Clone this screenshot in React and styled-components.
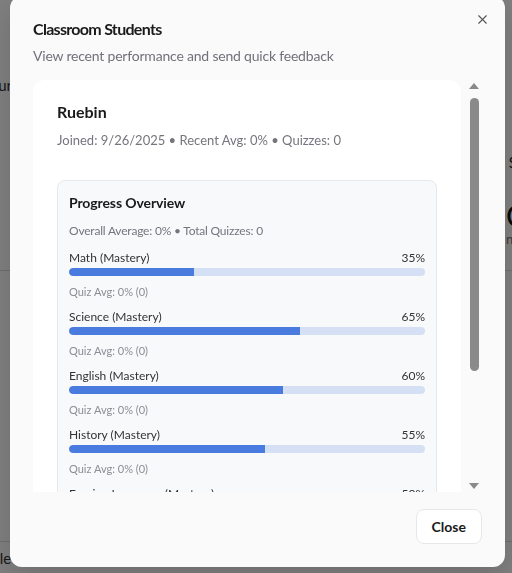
import React from 'react'
import styled, { createGlobalStyle } from 'styled-components'
import { X } from 'lucide-react'

const GlobalStyle = createGlobalStyle`
  * { box-sizing: border-box; }
  body {
    margin: 0;
    font-family: Lato, "Noto Sans", sans-serif;
    background: #fff;
    color: #1f1f1f;
  }
`

const student = {
  name: 'Ruebin',
  joined: '9/26/2025',
  recentAvg: 0,
  quizzes: 0,
}

const subjects = [
  { name: 'Math', value: 35 },
  { name: 'Science', value: 65 },
  { name: 'English', value: 60 },
  { name: 'History', value: 55 },
  { name: 'Foreign Language', value: 50 },
  { name: 'Art', value: 45 },
]

const App = () => {
  return (
    <>
      <GlobalStyle />
      <Page>
        <PageRow>
          <Peek>Your</Peek>
          <PeekRight>Sc</PeekRight>
        </PageRow>
        <PageRow>
          <span />
          <PeekBig>
            C<small>n</small>
          </PeekBig>
        </PageRow>
        <Divider />
        <PageFooter>
          <Peek>Title</Peek>
        </PageFooter>
      </Page>

      <Overlay>
        <Modal role='dialog'>
          <CloseIcon aria-label='close'>
            <X size={15} strokeWidth={1.8} />
          </CloseIcon>

          <Header>
            <h2>Classroom Students</h2>
            <p>View recent performance and send quick feedback</p>
          </Header>

          <ScrollArea>
            <Viewport>
              <StudentCard>
                <h3>{student.name}</h3>
                <p className='meta'>
                  Joined: {student.joined} • Recent Avg: {student.recentAvg}% • Quizzes: {student.quizzes}
                </p>

                <ProgressBox>
                  <h4>Progress Overview</h4>
                  <p className='summary'>Overall Average: 0% • Total Quizzes: 0</p>
                  {subjects.map((s) => (
                    <SubjectRow key={s.name}>
                      <div className='top'>
                        <span>{s.name} (Mastery)</span>
                        <span>{s.value}%</span>
                      </div>
                      <Track>
                        <Fill style={{ width: `${s.value}%` }} />
                      </Track>
                      <p className='quiz'>Quiz Avg: 0% (0)</p>
                    </SubjectRow>
                  ))}
                </ProgressBox>
              </StudentCard>
            </Viewport>

            <Scrollbar>
              <Arrow $dir='up' />
              <Thumb />
              <Arrow $dir='down' />
            </Scrollbar>
          </ScrollArea>

          <Footer>
            <Button>Close</Button>
          </Footer>
        </Modal>
      </Overlay>
    </>
  )
}

const Page = styled.div`
  height: 573px;
  overflow: hidden;
  display: flex;
  flex-direction: column;
  padding-top: 76px;
`

const PageRow = styled.div`
  display: flex;
  justify-content: space-between;
  align-items: flex-start;
`

const Peek = styled.span`
  font-size: 15px;
  color: #333;
  margin-left: -18px;
`

const PeekRight = styled.span`
  font-size: 15px;
  color: #222;
  margin-right: -12px;
  margin-top: 77px;
`

const PeekBig = styled.span`
  font-size: 30px;
  color: #111;
  margin-right: -14px;
  margin-top: 29px;
  display: flex;
  flex-direction: column;
  line-height: 30px;

  small {
    font-size: 13px;
    line-height: 18px;
    color: #777;
  }
`

const Divider = styled.div`
  height: 1px;
  background: #ddd;
  margin-top: 22px;
`

const PageFooter = styled.div`
  margin-top: auto;
  margin-bottom: 6px;
  border-top: 1px solid #ddd;
  padding-top: 6px;
`

const Overlay = styled.div`
  position: fixed;
  inset: 0;
  background: rgba(0, 0, 0, 0.5);
`

const Modal = styled.div`
  position: absolute;
  left: 10px;
  top: -4px;
  width: 495px;
  height: 571px;
  background: #fafafa;
  border-radius: 12px;
  box-shadow: 0 10px 30px rgba(0, 0, 0, 0.15);
  display: flex;
  flex-direction: column;
  padding: 0 23px;
`

const CloseIcon = styled.button`
  position: absolute;
  top: 16px;
  right: 15px;
  border: none;
  background: none;
  padding: 0;
  color: #555;
  display: flex;
  cursor: pointer;
`

const Header = styled.div`
  padding-top: 19px;

  h2 {
    margin: 0;
    font-size: 16px;
    letter-spacing: -0.7px;
    line-height: 28px;
    font-weight: 700;
    color: #1a1a1a;
  }

  p {
    margin: 3px 0 0;
    font-size: 14px;
    letter-spacing: -0.2px;
    line-height: 20px;
    color: #71717a;
  }
`

const ScrollArea = styled.div`
  margin-top: 14px;
  height: 412px;
  display: flex;
  gap: 5px;
`

const Viewport = styled.div`
  width: 429px;
  overflow: hidden;
`

const StudentCard = styled.div`
  background: #fff;
  border-radius: 12px;
  padding: 20px 24px 24px;

  h3 {
    margin: 0;
    font-size: 16px;
    line-height: 24px;
    font-weight: 700;
    color: #1a1a1a;
  }

  .meta {
    margin: 6px 0 0;
    font-size: 13px;
    line-height: 20px;
    color: #75757e;
  }
`

const ProgressBox = styled.div`
  margin-top: 30px;
  background: #f8f9fb;
  border: 1px solid #e6e8ec;
  border-radius: 8px;
  padding: 11px 11px 12px;

  h4 {
    margin: 0;
    font-size: 14px;
    letter-spacing: -0.1px;
    line-height: 22px;
    font-weight: 700;
    color: #1a1a1a;
  }

  .summary {
    margin: 8px 0 9px;
    font-size: 12px;
    letter-spacing: -0.2px;
    line-height: 18px;
    color: #75757e;
  }
`

const SubjectRow = styled.div`
  margin-bottom: 8px;

  .top {
    display: flex;
    justify-content: space-between;
    font-size: 12px;
    line-height: 18px;
    color: #333;
  }

  .quiz {
    margin: 8px 0 0;
    font-size: 11px;
    line-height: 16px;
    color: #8d8d94;
  }
`

const Track = styled.div`
  margin-top: 1px;
  height: 8px;
  border-radius: 4px;
  background: #d6e0f5;
  overflow: hidden;
`

const Fill = styled.div`
  height: 100%;
  background: #4a7ce0;
  border-radius: 4px 0 0 4px;
`

const Scrollbar = styled.div`
  width: 16px;
  display: flex;
  flex-direction: column;
  align-items: center;
  padding: 3px 0;
`

const Arrow = styled.div`
  width: 0;
  height: 0;
  border-left: 5px solid transparent;
  border-right: 5px solid transparent;
  ${({ $dir }) =>
    $dir === 'up'
      ? 'border-bottom: 6px solid #8a8a8a; margin-bottom: 9px;'
      : 'border-top: 6px solid #8a8a8a; margin-top: auto;'}
`

const Thumb = styled.div`
  width: 9px;
  height: 273px;
  background: #8a8a8a;
  border-radius: 5px;
`

const Footer = styled.div`
  flex: 1;
  display: flex;
  justify-content: flex-end;
  align-items: flex-start;
  padding-top: 17px;
`

const Button = styled.button`
  height: 35px;
  padding: 0 15px;
  font-family: inherit;
  font-size: 14px;
  font-weight: 700;
  color: #1a1a1a;
  background: #fff;
  border: 1px solid #e5e7eb;
  border-radius: 8px;
  cursor: pointer;
`

export default App
